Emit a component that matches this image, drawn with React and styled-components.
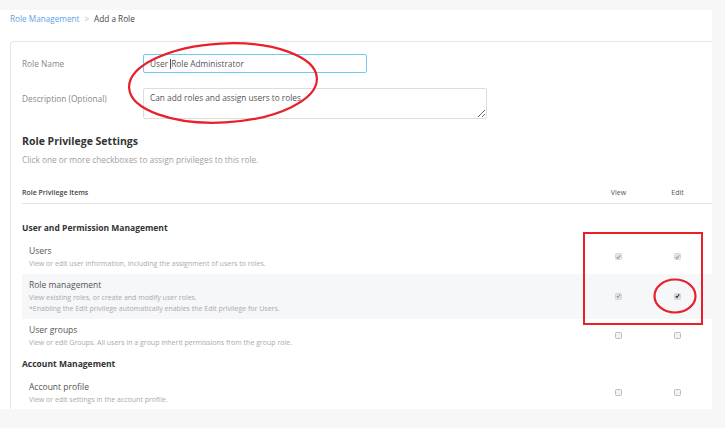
import React from 'react';
import styled, { createGlobalStyle } from 'styled-components';

const GlobalStyle = createGlobalStyle`
	html, body {
		margin: 0;
		padding: 0;
		background: #f7f7f8;
		font-family: "Open Sans", "Liberation Sans", sans-serif;
	}
`;

const Page = styled.div`
	width: 712px;
	height: 399px;
	margin-top: 10px;
	background: #fff;
	overflow: hidden;
	position: relative;
`;

const Breadcrumb = styled.div`
	padding: 3px 0 0 10px;
	height: 28px;
	font-size: 8.2px;
	line-height: 12px;
	color: #444;
	display: flex;
	gap: 5px;
`;

const Crumb = styled.a`
	color: #5ea3e5;
	text-decoration: none;
`;

const Sep = styled.span`
	color: #bbb;
`;

const Card = styled.div`
	margin-left: 10px;
	border-top: 1px solid #e6e6e6;
	border-left: 1px solid #e6e6e6;
	border-top-left-radius: 4px;
	padding: 12px 0 0 11px;
`;

const FormRow = styled.div`
	display: flex;
	align-items: ${p => (p.$top ? 'flex-start' : 'center')};
	margin-bottom: 15px;
`;

const Label = styled.label`
	width: 121px;
	font-size: 8.3px;
	color: #888;
	line-height: 19px;
	padding-top: ${p => (p.$top ? '1px' : '0')};
`;

const TextField = styled.div`
	width: 224px;
	height: 19px;
	box-sizing: border-box;
	border: 1px solid #6dcbf2;
	border-radius: 2px;
	padding: 0 6px;
	font-size: 8.3px;
	line-height: 17px;
	color: #555;
`;

const Caret = styled.span`
	display: inline-block;
	width: 1px;
	height: 10px;
	background: #555;
	vertical-align: -2px;
`;

const TextArea = styled.textarea`
	width: 344px;
	height: 31px;
	box-sizing: border-box;
	border: 1px solid #ddd;
	border-radius: 2px;
	padding: 3px 6px;
	font-family: "Open Sans", "Liberation Sans", sans-serif;
	font-size: 8.3px;
	line-height: 12px;
	color: #555;
	margin: 0;
	display: block;
	outline: none;
`;

const Heading = styled.h2`
	margin: 0;
	font-size: 10.5px;
	font-weight: 700;
	line-height: 14px;
	color: #333;
`;

const Subtitle = styled.p`
	margin: 6px 0 0;
	font-size: 8.3px;
	line-height: 11px;
	color: #a0a0a0;
`;

const Grid = styled.div`
	display: grid;
	grid-template-columns: 1fr 59px 59px;
	padding-right: 5px;
	align-items: center;
`;

const HeaderRow = styled(Grid)`
	margin-top: 23px;
	padding-bottom: 5px;
	border-bottom: 1px solid #e3e3e3;
	font-size: 7px;
	line-height: 10px;
	font-weight: 600;
	color: #444;
`;

const ColHead = styled.div`
	text-align: center;
	font-weight: 400;
	color: #555;
`;

const Section = styled.div`
	margin-top: ${p => (p.$first ? '13px' : '0')};
`;

const SectionTitle = styled.div`
	padding: 4px 0 5px;
	font-size: 8.5px;
	line-height: 14px;
	font-weight: 700;
	color: #333;
`;

const ItemRow = styled(Grid)`
	padding-top: 4px;
	padding-bottom: 5px;
	background: ${p => (p.$shaded ? '#f6f7f9' : 'transparent')};
`;

const ItemText = styled.div`
	padding-left: 7px;
`;

const ItemTitle = styled.div`
	font-size: 8.5px;
	line-height: 13px;
	color: #555;
`;

const ItemDesc = styled.div`
	font-size: 7px;
	line-height: 11px;
	color: #aaa;
	margin-top: ${p => (p.$first ? '1px' : '0')};
`;

const Cell = styled.div`
	display: flex;
	justify-content: center;
`;

const Box = styled.span`
	width: 7px;
	height: 7px;
	box-sizing: border-box;
	border-radius: 1.5px;
	border: 1px solid ${p => (p.$checked ? '#d6d6d6' : '#bdbdbd')};
	background: ${p => (p.$active ? '#dadada' : p.$checked ? '#e6e6e6' : '#f2f2f2')};
	display: flex;
	align-items: center;
	justify-content: center;
`;

const RedEllipse = styled.svg`
	position: absolute;
	left: 126px;
	top: 31px;
	overflow: visible;
`;

const RedBox = styled.div`
	position: absolute;
	left: 583px;
	top: 222px;
	width: 120px;
	height: 93px;
	box-sizing: border-box;
	border: 2.5px solid #e8202a;
`;

function Checkbox({ checked, active }) {
	return (
		<Box $checked={checked} $active={active}>
			{checked && (
				<svg width="6" height="6" viewBox="0 0 10 10">
					<path d="M1.5 5.5 L4 8 L8.5 1.5" fill="none" stroke={active ? '#2a2a2a' : '#9a9a9a'} strokeWidth="2.2" />
				</svg>
			)}
		</Box>
	);
}

const sections = [
	{
		title: 'User and Permission Management',
		items: [
			{ name: 'Users', desc: ['View or edit user information, including the assignment of users to roles.'], view: true, edit: true },
			{
				name: 'Role management',
				desc: ['View existing roles, or create and modify user roles.', '*Enabling the Edit privilege automatically enables the Edit privilege for Users.'],
				view: true,
				edit: true,
				active: true,
				shaded: true,
			},
			{ name: 'User groups', desc: ['View or edit Groups. All users in a group inherit permissions from the group role.'] },
		],
	},
	{
		title: 'Account Management',
		items: [{ name: 'Account profile', desc: ['View or edit settings in the account profile.'] }],
	},
];

export default function App() {
	return (
		<>
			<GlobalStyle />
			<Page>
				<Breadcrumb>
					<Crumb href="#">Role Management</Crumb>
					<Sep>&gt;</Sep>
					<span>Add a Role</span>
				</Breadcrumb>
				<Card>
					<FormRow>
						<Label>Role Name</Label>
						<TextField>
							User <Caret />Role Administrator
						</TextField>
					</FormRow>
					<FormRow $top>
						<Label $top>Description (Optional)</Label>
						<TextArea readOnly value="Can add roles and assign users to roles" />
					</FormRow>
					<Heading>Role Privilege Settings</Heading>
					<Subtitle>Click one or more checkboxes to assign privileges to this role.</Subtitle>
					<HeaderRow>
						<div>Role Privilege Items</div>
						<ColHead>View</ColHead>
						<ColHead>Edit</ColHead>
					</HeaderRow>
					{sections.map((s, i) => (
						<Section key={s.title} $first={i === 0}>
							<SectionTitle>{s.title}</SectionTitle>
							{s.items.map(item => (
								<ItemRow key={item.name} $shaded={item.shaded}>
									<ItemText>
										<ItemTitle>{item.name}</ItemTitle>
										{item.desc.map((d, j) => (
											<ItemDesc key={j} $first={j === 0}>{d}</ItemDesc>
										))}
									</ItemText>
									<Cell><Checkbox checked={item.view} /></Cell>
									<Cell><Checkbox checked={item.edit} active={item.active} /></Cell>
								</ItemRow>
							))}
						</Section>
					))}
				</Card>
				<RedEllipse width="192" height="82">
					<ellipse cx="97" cy="42" rx="94" ry="39.5" fill="none" stroke="#e8202a" strokeWidth="2.2" transform="rotate(-3 97 42)" />
				</RedEllipse>
				<RedBox />
				<RedEllipse width="44" height="36" style={{ left: 653, top: 268 }}>
					<ellipse cx="22" cy="18" rx="20.5" ry="16.5" fill="none" stroke="#e8202a" strokeWidth="2.2" />
				</RedEllipse>
			</Page>
		</>
	);
}
